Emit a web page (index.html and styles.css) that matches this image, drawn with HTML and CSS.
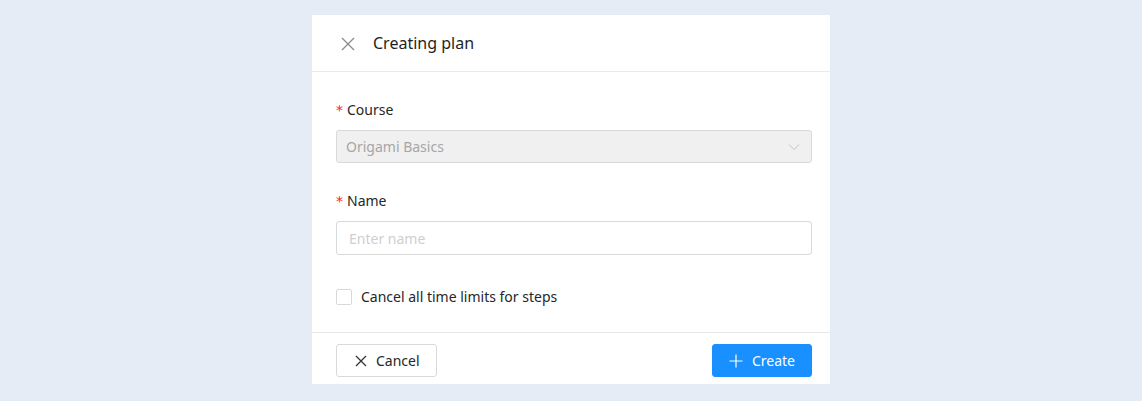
FILE: index.html
```html
<!DOCTYPE html>
<html lang="en">
<head>
    <meta charset="UTF-8">
    <title>Creating plan</title>
    <link rel="stylesheet" href="styles.css">
</head>
<body>

<div class="modal">
    <div class="modal-header">
        <button class="close-btn" aria-label="Close">
            <svg width="14" height="14" viewBox="0 0 14 14"><path d="M1 1L13 13M13 1L1 13" stroke="#8c8c8c" stroke-width="1.3" fill="none"/></svg>
        </button>
        <span class="modal-title">Creating plan</span>
    </div>

    <div class="modal-body">
        <div class="field">
            <label class="field-label required">Course</label>
            <div class="select disabled">
                <span>Origami Basics</span>
                <svg width="12" height="8" viewBox="0 0 12 8"><path d="M1 1.5L6 6.5L11 1.5" stroke="#c4c4c4" stroke-width="1" fill="none"/></svg>
            </div>
        </div>

        <div class="field">
            <label class="field-label required">Name</label>
            <input class="text-input" type="text" placeholder="Enter name">
        </div>

        <label class="checkbox">
            <span class="checkbox-box"></span>
            Cancel all time limits for steps
        </label>
    </div>

    <div class="modal-footer">
        <button class="btn">
            <svg width="12" height="12" viewBox="0 0 12 12"><path d="M1 1L11 11M11 1L1 11" stroke="#333" stroke-width="1.3" fill="none"/></svg>
            Cancel
        </button>
        <button class="btn btn-primary">
            <svg width="14" height="14" viewBox="0 0 14 14"><path d="M7 0.5V13.5M0.5 7H13.5" stroke="#fff" stroke-width="1.2" fill="none"/></svg>
            Create
        </button>
    </div>
</div>

</body>
</html>
```

FILE: styles.css
```css
body {
    margin: 0;
    background: #e6ecf5;
    font-family: "Noto Sans", "Open Sans", sans-serif;
    font-size: 14px;
    color: #262626;
}

.modal {
    width: 518px;
    margin: 15px auto 0;
    background: #fff;
}

.modal-header {
    display: flex;
    align-items: center;
    height: 56px;
    padding: 0 24px;
    border-bottom: 1px solid #ebebeb;
}

.close-btn {
    display: flex;
    padding: 0;
    margin: 1px 18px 0 5px;
    border: none;
    background: none;
    cursor: pointer;
}

.modal-title {
    font-size: 16px;
    color: #1f1f1f;
}

.modal-body {
    padding: 27px 18px 24px 24px;
}

.field {
    margin-bottom: 27px;
}

.field-label {
    display: block;
    line-height: 22px;
    margin-bottom: 9px;
    color: #262626;
}

.field-label.required::before {
    content: "*";
    color: #f5222d;
    margin-right: 4px;
    font-family: SimSun, "DejaVu Sans", sans-serif;
    font-size: 14px;
}

.select {
    display: flex;
    align-items: center;
    justify-content: space-between;
    height: 31px;
    padding: 0 11px 0 9px;
    border: 1px solid #d9d9d9;
    border-radius: 3px;
}

.select.disabled {
    background: #f0f0f0;
    color: #a6a6a6;
}

.text-input {
    display: block;
    box-sizing: border-box;
    width: 100%;
    height: 34px;
    padding: 0 12px;
    border: 1px solid #d9d9d9;
    border-radius: 3px;
    font: inherit;
    outline: none;
}

.text-input::placeholder {
    color: #cfcfcf;
}

/* margin collapses with the field above, so this is the full gap */
.checkbox {
    display: flex;
    align-items: center;
    gap: 9px;
    margin-top: 31px;
    line-height: 22px;
}

.checkbox-box {
    width: 14px;
    height: 14px;
    border: 1px solid #d9d9d9;
    border-radius: 2px;
}

.modal-footer {
    display: flex;
    justify-content: space-between;
    padding: 11px 18px 7px 24px;
    border-top: 1px solid #e8e8e8;
}

.btn {
    display: flex;
    align-items: center;
    gap: 9px;
    height: 33px;
    padding: 0 16px 0 18px;
    border: 1px solid #d9d9d9;
    border-radius: 3px;
    background: #fff;
    color: #262626;
    font: inherit;
    cursor: pointer;
}

.btn-primary {
    width: 100px;
    justify-content: center;
    padding: 0;
    border-color: #1890ff;
    background: #1890ff;
    color: #fff;
}
```
